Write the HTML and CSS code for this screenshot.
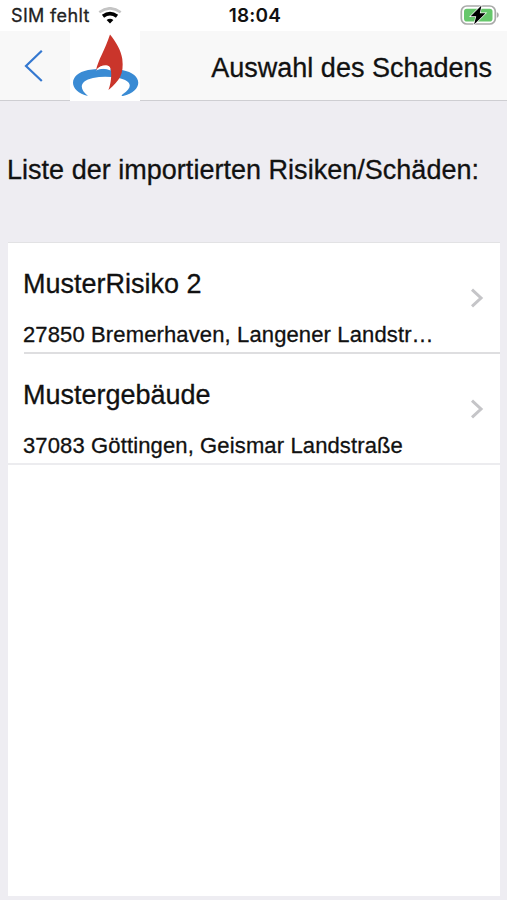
FILE: index.html
```html
<!DOCTYPE html>
<html lang="de">
<head>
<meta charset="utf-8">
<title>Auswahl des Schadens</title>
<link rel="stylesheet" href="styles.css">
</head>
<body>
<div class="status">
  <div class="carrier">
    <span>SIM fehlt</span>
    <svg class="wifi" width="24" height="18" viewBox="0 0 24 18">
      <path d="M1.3 5.2Q12-2.6 22.7 5.2" fill="none" stroke="#c4c4c4" stroke-width="2.6"/>
      <path d="M5 9.2Q12 4 19 9.2" fill="none" stroke="#000" stroke-width="3.6"/>
      <path d="M8.6 13Q12 10.4 15.4 13L12 16.5Z" fill="#000"/>
    </svg>
  </div>
  <time class="clock">18:04</time>
  <svg class="battery" width="40" height="22" viewBox="0 0 40 22">
    <rect x="2.3" y="2" width="34" height="18" rx="5.5" fill="#fff" stroke="#a9aba9" stroke-width="1.7"/>
    <rect x="5" y="4.7" width="28.5" height="12.8" rx="2.8" fill="#66c76b"/>
    <path d="M37.8 8q2 1 2 3t-2 3z" fill="#a9aba9"/>
    <path d="M22.5 1.5L11.7 12.3h5.5L15.1 20.5L26.5 9.2h-5.7z" fill="#000" stroke="#fff" stroke-width="1.4" paint-order="stroke"/>
  </svg>
</div>
<header class="nav">
  <svg class="back" width="20" height="34" viewBox="0 0 20 34">
    <path d="M17.8 1.8L2 17L17.8 32" fill="none" stroke="#3478d0" stroke-width="2.2"/>
  </svg>
  <svg class="logo" width="70" height="70" viewBox="0 0 70 70">
    <rect width="70" height="70" fill="#fff"/>
    <path d="M18 65C-2 60-2 43 18 39Q35 36 52 39C74 43 73 60 53 65C51 65.5 51.5 64 53 63C64 56 61 49 48 47Q35 44.5 23 47C9 50 9 58 18 65Z" fill="#3a8bd4"/>
    <path d="M26 39.5C28 29 35 19 40 3.5C46 11 51 19 52.3 28C54 43 50 49 38.5 59C41.5 52 43 36 38 34.8Q30 33.5 26 39.5Z" fill="#ca352b"/>
    <path d="M26 39.5Q30 34 37 34.6C39.3 35.2 40.3 37 40.6 39.5Q33 36 26 39.5Z" fill="#fff"/>
  </svg>
  <h1 class="title">Auswahl des Schadens</h1>
</header>
<main class="content">
  <h2 class="heading">Liste der importierten Risiken/Schäden:</h2>
  <ul class="list">
    <li class="item">
      <div class="info">
        <div class="name">MusterRisiko 2</div>
        <div class="address">27850 Bremerhaven, Langener Landstr…</div>
      </div>
      <svg class="chevron" width="14" height="20" viewBox="0 0 14 20"><path d="M2 1.7L11 10L2 18.3" fill="none" stroke="#c5c5c8" stroke-width="3"/></svg>
    </li>
    <li class="item">
      <div class="info">
        <div class="name">Mustergebäude</div>
        <div class="address">37083 Göttingen, Geismar Landstraße</div>
      </div>
      <svg class="chevron" width="14" height="20" viewBox="0 0 14 20"><path d="M2 1.7L11 10L2 18.3" fill="none" stroke="#c5c5c8" stroke-width="3"/></svg>
    </li>
  </ul>
</main>
</body>
</html>
```

FILE: styles.css
```css
* {
  box-sizing: border-box;
}

body {
  margin: 0;
  height: 900px;
  display: flex;
  flex-direction: column;
  overflow: hidden;
  background: #eeedf2;
  color: #111;
  font-family: "Liberation Sans", Arial, sans-serif;
  -webkit-text-stroke: 0.3px currentColor;
}

.status {
  height: 31px;
  display: grid;
  grid-template-columns: 1fr auto 1fr;
  align-items: center;
  padding: 1px 8px 0 11px;
  background: #fff;
}

.carrier {
  display: flex;
  align-items: center;
  gap: 8px;
  font-family: Inter, sans-serif;
  font-size: 18px;
  line-height: 22px;
  letter-spacing: 0.35px;
  color: #222;
}

.clock {
  font-family: Inter, sans-serif;
  font-size: 19px;
  font-weight: 600;
  line-height: 22px;
  letter-spacing: 0.2px;
  -webkit-text-stroke: 0;
}

.battery {
  justify-self: end;
  margin-bottom: 3px;
}

.nav {
  height: 70px;
  flex: none;
  display: flex;
  align-items: flex-start;
  padding: 0 15px 0 24px;
  background: #f8f8f8;
  border-bottom: 1px solid #ceced2;
}

.back {
  margin-top: 18px;
}

.logo {
  flex: none;
  margin: 0 0 -1px 26px;
  height: 70px;
}

.title {
  margin: 21px 0 0 auto;
  font-size: 27px;
  font-weight: 400;
  line-height: 32px;
  white-space: nowrap;
}

.content {
  flex: 1;
  display: flex;
  flex-direction: column;
  padding: 54px 7px 4px 8px;
}

.heading {
  margin: 0 0 56px -1px;
  font-size: 27px;
  font-weight: 400;
  line-height: 31px;
  letter-spacing: 0.02px;
  white-space: nowrap;
}

.list {
  flex: 1;
  margin: 0;
  padding: 0;
  list-style: none;
  background: #fff;
  border-top: 1px solid #e2e2e4;
}

.item {
  height: 111px;
  display: flex;
  align-items: center;
  justify-content: space-between;
  margin-left: 16px;
  padding-right: 16px;
  border-bottom: 2px solid #dedee0;
}

.item:last-child {
  margin-left: 0;
  padding-left: 16px;
  border-bottom-color: #ececef;
}

.info {
  align-self: flex-start;
  padding-top: 26px;
  white-space: nowrap;
}

.name {
  margin-left: -1px;
  font-size: 27px;
  line-height: 31px;
}

.address {
  margin: 22px 0 0 -1px;
  font-size: 22px;
  line-height: 25px;
  letter-spacing: 0.13px;
}
```
